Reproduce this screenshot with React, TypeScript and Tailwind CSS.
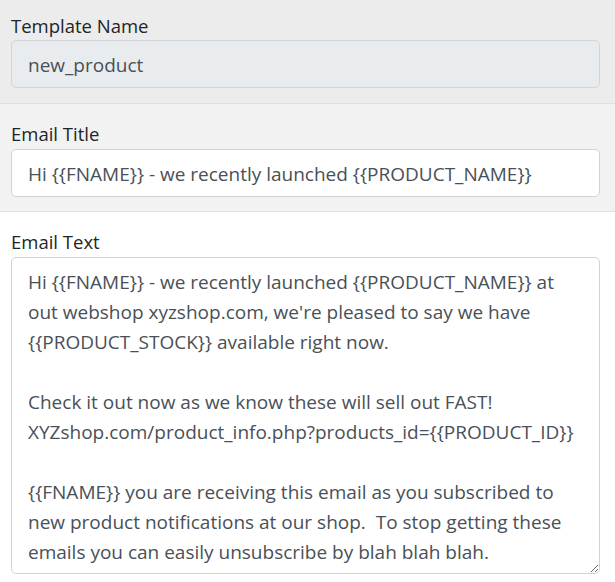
import React from "react";

const FONT = { fontFamily: '"Open Sans", "Noto Sans", sans-serif' };

const BODY = `Hi {{FNAME}} - we recently launched {{PRODUCT_NAME}} at
out webshop xyzshop.com, we're pleased to say we have
{{PRODUCT_STOCK}} available right now.

Check it out now as we know these will sell out FAST!
XYZshop.com/product_info.php?products_id={{PRODUCT_ID}}

{{FNAME}} you are receiving this email as you subscribed to
new product notifications at our shop.  To stop getting these
emails you can easily unsubscribe by blah blah blah.`;

function Label({ children }: { children: React.ReactNode }) {
  return <label className="block text-[18.5px] leading-[30px] text-[#212529]">{children}</label>;
}

export default function App() {
  return (
    <div className="w-[615px] h-[582px] overflow-hidden bg-white" style={FONT}>
      {/* template name (read only) */}
      <div className="bg-[#ececec] pt-[10px] pb-[15px] pl-[11px] pr-[15px] border-b border-[#e0e0e0]">
        <label className="block text-[18.5px] leading-[30px] pt-[1px] -mb-[1px] text-[#212529]">Template Name</label>
        <input
          readOnly
          value="new_product"
          className="block w-full h-[48px] px-4 pt-[2px] rounded-[5px] border border-[#ced4da] bg-[#e9ecef] text-[19px] text-[#495057] outline-none"
          style={FONT}
        />
      </div>

      {/* subject line */}
      <div className="bg-[#f2f2f2] pt-[15px] pb-[14px] pl-[11px] pr-[15px] border-b border-[#e0e0e0]">
        <Label>Email Title</Label>
        <input
          defaultValue="Hi {{FNAME}} - we recently launched {{PRODUCT_NAME}}"
          className="block w-full h-[48px] px-4 pt-[2px] rounded-[5px] border border-[#ced4da] bg-white text-[19px] text-[#495057] outline-none"
          style={FONT}
        />
      </div>

      {/* body */}
      <div className="bg-white pt-[15px] pl-[11px] pr-[15px]">
        <Label>Email Text</Label>
        <textarea
          defaultValue={BODY}
          wrap="off"
          className="block w-full h-[317px] pt-[9px] pb-2 px-4 rounded-[5px] border border-[#ced4da] bg-white text-[19px] leading-[30px] text-[#495057] outline-none overflow-hidden resize-y"
          style={FONT}
        />
      </div>
    </div>
  );
}
